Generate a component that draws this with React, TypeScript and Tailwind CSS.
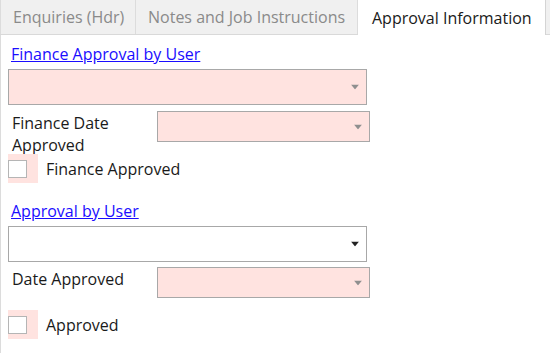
import React from 'react';

const Arrow = ({ dark }: { dark?: boolean }) => (
  <svg width="8" height="5" viewBox="0 0 8 5" className="absolute right-[7px] top-1/2 -translate-y-1/2">
    <path d="M0 0 L8 0 L4 5 Z" fill={dark ? '#222222' : '#8f8f8f'} />
  </svg>
);

const Select = ({ className, pink, dark }: { className: string; pink?: boolean; dark?: boolean }) => (
  <div
    className={`relative border border-[#a8a8a8] ${pink ? 'bg-[#ffe3e0]' : 'bg-white'} ${className}`}
  >
    <Arrow dark={dark} />
  </div>
);

const Check = ({ label }: { label: string }) => (
  <div className="flex items-center">
    <div className="flex h-[29px] w-[30px] items-center bg-[#ffe3e0]">
      <div className="h-[18px] w-[19px] border border-[#b5b5b5] bg-white" />
    </div>
    <span className="ml-[8px] text-[#1a1a1a]">{label}</span>
  </div>
);

export default function App() {
  return (
    <div
      className="relative h-[353px] w-[550px] overflow-hidden bg-white text-[16px] leading-[22px]"
      style={{ fontFamily: '"Open Sans", "Noto Sans", sans-serif' }}
    >
      <div className="flex h-[35px] border-b border-[#d9d9d9] bg-[#f0f0f0]">
        <div className="flex w-[136px] items-center border-x border-[#dcdcdc] pl-[12px] text-[#8a8a8a]">
          Enquiries (Hdr)
        </div>
        <div className="flex w-[222px] items-center border-r border-[#dcdcdc] pl-[12px] text-[#8a8a8a]">
          Notes and Job Instructions
        </div>
        <div className="-mb-px flex w-[188px] items-center border-r border-[#d4d4d4] bg-white pl-[14px] text-[#1a1a1a]">
          Approval Information
        </div>
      </div>

      <div className="h-full border-l border-[#dcdcdc] pl-[7px] pt-[8px]">
        <a href="#" className="ml-[3px] text-[#1a0dff] underline">
          Finance Approval by User
        </a>
        <Select className="mt-[4px] h-[36px] w-[359px]" pink />
        <div className="mt-[6px] flex">
          <div className="w-[149px] pl-[4px] pt-px text-[#1a1a1a]">
            Finance Date
            <br />
            Approved
          </div>
          <Select className="h-[31px] w-[213px]" pink />
        </div>
        <div className="-mt-[2px]">
          <Check label="Finance Approved" />
        </div>

        <a href="#" className="ml-[3px] mt-[17px] block w-fit text-[#1a0dff] underline">
          Approval by User
        </a>
        <Select className="mt-[4px] h-[36px] w-[359px]" dark />
        <div className="mt-[5px] flex">
          <div className="w-[149px] pl-[4px] pt-px text-[#1a1a1a]">Date Approved</div>
          <Select className="h-[31px] w-[213px]" pink />
        </div>
        <div className="mt-[12px]">
          <Check label="Approved" />
        </div>
      </div>
    </div>
  );
}
